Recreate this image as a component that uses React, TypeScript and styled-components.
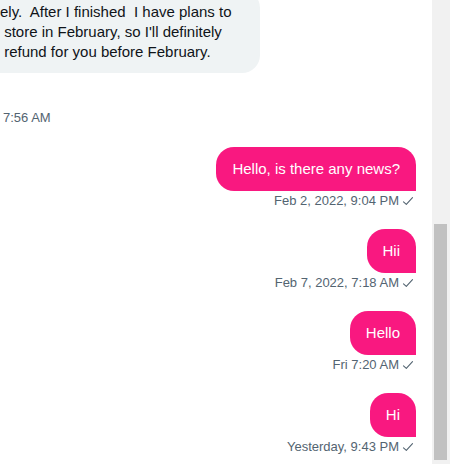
import React from "react";
import styled, { createGlobalStyle } from "styled-components";

const Global = createGlobalStyle`
  html, body { margin: 0; padding: 0; background: #ffffff; }
  body { font-family: "Liberation Sans", Arial, sans-serif; overflow: hidden; }
`;

const Screen = styled.div`
  display: flex;
  width: 464px;
  height: 464px;
  overflow: hidden;
  background: #ffffff;
`;

const Conversation = styled.div`
  flex: 1;
  min-width: 0;
  display: flex;
  flex-direction: column;
  padding-right: 16px;
`;

const ReceivedGroup = styled.div`
  display: flex;
  flex-direction: column;
  align-items: flex-start;
  margin-top: -10px;
  margin-left: -16px;
`;

const ReceivedBubble = styled.div`
  width: 276px;
  box-sizing: border-box;
  padding: 12px 16px 11px;
  background: #eff3f4;
  color: #0f1419;
  border-radius: 18px 18px 18px 0;
  font-size: 15px;
  line-height: 20px;
`;

const Line = styled.span`
  display: block;
  white-space: pre;
`;

const Meta = styled.div<{ $align: "start" | "end" }>`
  display: flex;
  align-items: center;
  justify-content: ${(p) => (p.$align === "end" ? "flex-end" : "flex-start")};
  gap: 3px;
  height: 16px;
  font-size: 13px;
  line-height: 16px;
  color: #536471;
  white-space: nowrap;
`;

const ReceivedMeta = styled(Meta)`
  margin-top: 37px;
  margin-left: 19px;
`;

const SentGroup = styled.div`
  display: flex;
  flex-direction: column;
  align-items: flex-end;
  margin-top: 21px;
  & + & {
    margin-top: 20px;
  }
`;

const SentBubble = styled.div`
  box-sizing: border-box;
  height: 44px;
  display: flex;
  align-items: center;
  padding: 0 16px;
  background: #f91880;
  color: #ffffff;
  border-radius: 18px 18px 0 18px;
  font-size: 15px;
  line-height: 20px;
  white-space: nowrap;
`;

const SentMeta = styled(Meta)`
  margin-top: 2px;
  margin-right: 2px;
`;

const ScrollTrack = styled.div`
  width: 18px;
  flex: none;
  background: #f1f1f1;
  display: flex;
  flex-direction: column;
  padding: 224px 3px 4px 2px;
  box-sizing: border-box;
`;

const ScrollThumb = styled.div`
  flex: 1;
  background: #c1c1c1;
`;

const Gutter = styled.div`
  width: 14px;
  flex: none;
  background: #ffffff;
`;

const Check = () => (
  <svg width="12" height="12" viewBox="0 0 12 12" fill="none">
    <path d="M1.5 6.8 L4.3 9.4 L10.5 2.6" stroke="#536471" strokeWidth="1.1" strokeLinecap="round" strokeLinejoin="round" />
  </svg>
);

const sent = [
  { text: "Hello, is there any news?", time: "Feb 2, 2022, 9:04 PM" },
  { text: "Hii", time: "Feb 7, 2022, 7:18 AM" },
  { text: "Hello", time: "Fri 7:20 AM" },
  { text: "Hi", time: "Yesterday, 9:43 PM" },
];

export default function App() {
  return (
    <Screen>
      <Global />
      <Conversation>
        <ReceivedGroup>
          <ReceivedBubble>
            <Line>ely.  After I finished  I have plans to</Line>
            <Line> store in February, so I'll definitely</Line>
            <Line> refund for you before February.</Line>
          </ReceivedBubble>
          <ReceivedMeta $align="start">7:56 AM</ReceivedMeta>
        </ReceivedGroup>
        {sent.map((m) => (
          <SentGroup key={m.time}>
            <SentBubble>{m.text}</SentBubble>
            <SentMeta $align="end">
              {m.time}
              <Check />
            </SentMeta>
          </SentGroup>
        ))}
      </Conversation>
      <ScrollTrack>
        <ScrollThumb />
      </ScrollTrack>
      <Gutter />
    </Screen>
  );
}
